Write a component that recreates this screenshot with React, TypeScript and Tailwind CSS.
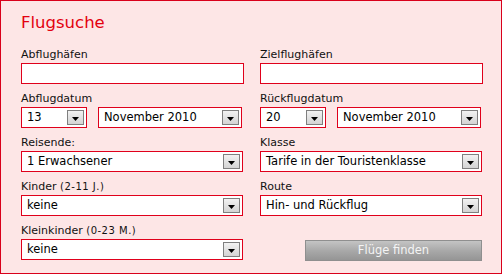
import React from 'react';

const font = { fontFamily: '"DejaVu Sans", Verdana, sans-serif' };

const Arrow = () => (
  <span className="flex h-[15px] w-[17px] items-center justify-center border border-[#7f7f7f] bg-gradient-to-b from-[#f2f2f2] to-[#d4d4d4]">
    <svg width="7" height="4" viewBox="0 0 7 4" className="mt-[3px]">
      <path d="M0 0h7L3.5 4z" fill="#000" />
    </svg>
  </span>
);

const Select = ({ value, className = '' }: { value: string; className?: string }) => (
  <div
    className={`flex h-[21px] items-center justify-between border border-[#e0001b] bg-white pl-[5px] pr-[2px] text-[11.5px] text-black ${className}`}
  >
    <span>{value}</span>
    <Arrow />
  </div>
);

const Label = ({ children }: { children: React.ReactNode }) => (
  <div className="h-[16px] text-[11px] leading-[15px] text-[#111]">{children}</div>
);

const Small = ({ children }: { children: React.ReactNode }) => (
  <span className="text-[10px] tracking-[0.5px]">{children}</span>
);

const TextInput = () => <div className="h-[21px] w-[223px] border border-[#e0001b] bg-white" />;

const DateRow = ({ day }: { day: string }) => (
  <div className="flex gap-[11px]">
    <Select value={day} className="w-[66px]" />
    <Select value="November 2010" className="w-[144px]" />
  </div>
);

export default function App() {
  return (
    <div style={font} className="h-[274px] w-[502px] border border-[#d9001b] bg-[#fde6e6] pl-[20px]">
      <h1 className="pt-[12px] text-[16.5px] leading-[20px] text-[#e3000f]">Flugsuche</h1>
      <div className="mt-[14px] grid grid-cols-[222px_222px] gap-x-[17px]">
        <div className="h-[44px]">
          <Label>Abflughäfen</Label>
          <TextInput />
        </div>
        <div className="h-[44px]">
          <Label>Zielflughäfen</Label>
          <TextInput />
        </div>
        <div className="h-[44px]">
          <Label>Abflugdatum</Label>
          <DateRow day="13" />
        </div>
        <div className="h-[44px]">
          <Label>Rückflugdatum</Label>
          <DateRow day="20" />
        </div>
        <div className="h-[44px]">
          <Label>Reisende:</Label>
          <Select value="1 Erwachsener" />
        </div>
        <div className="h-[44px]">
          <Label>Klasse</Label>
          <Select value="Tarife in der Touristenklasse" />
        </div>
        <div className="h-[44px]">
          <Label>
            Kinder <Small>(2-11 J.)</Small>
          </Label>
          <Select value="keine" />
        </div>
        <div className="h-[44px]">
          <Label>Route</Label>
          <Select value="Hin- und Rückflug" />
        </div>
        <div className="h-[44px]">
          <Label>
            Kleinkinder <Small>(0-23 M.)</Small>
          </Label>
          <Select value="keine" />
        </div>
        <div className="flex h-[44px] justify-end pt-[17px]">
          <button className="h-[21px] w-[177px] border border-[#8f8f8f] bg-gradient-to-b from-[#c4c4c4] via-[#a9a9a9] to-[#959595] text-[11.5px] text-[#f4f4f4]">
            Flüge finden
          </button>
        </div>
      </div>
    </div>
  );
}
